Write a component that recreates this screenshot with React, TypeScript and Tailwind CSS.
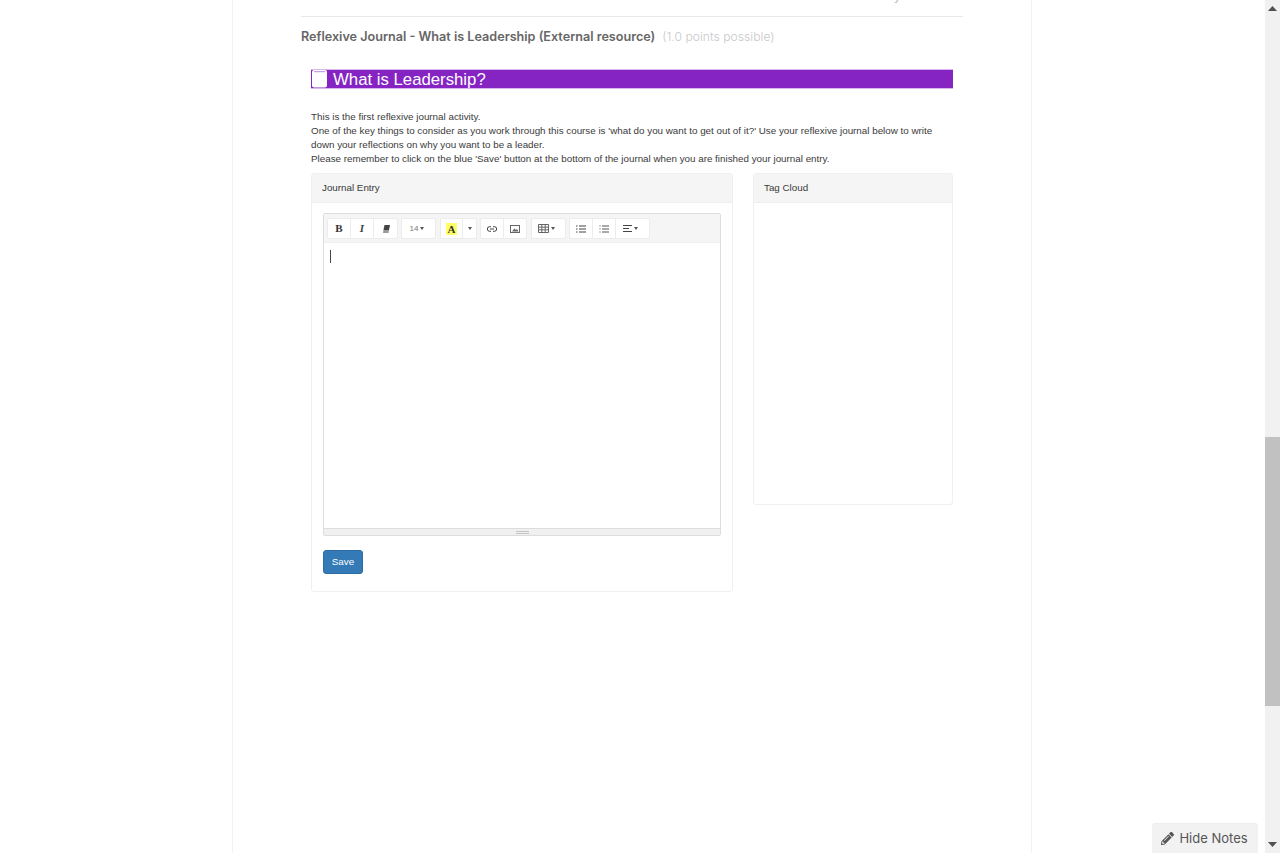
import { FaPencilAlt } from "react-icons/fa";

const sep = "border-l border-[#ececec]";
const group = "flex h-[21px] items-center rounded-[2px] border border-[#ececec] bg-white";

function Btn({ w, children, divider }: { w: string; children: React.ReactNode; divider?: boolean }) {
  return <div className={`flex h-full items-center justify-center ${w} ${divider ? sep : ""}`}>{children}</div>;
}

const Caret = () => (
  <svg width="4" height="3" viewBox="0 0 4 3" className="ml-[2px]"><path d="M0 0h4L2 3z" fill="#555" /></svg>
);

export default function App() {
  return (
    <div className="relative flex h-[853px] w-full overflow-hidden bg-white font-['Liberation_Sans',sans-serif] text-[#3a3a3a]">
      <div className="flex flex-1 justify-center">
        <div className="ml-[-1px] h-full w-[800px] border-x border-[#f2f2f2] px-[68px]">
          <div className="relative h-[17px] border-b border-[#e9e9e9]">
            <span className="absolute right-[62px] top-[-13px] font-['Inter',sans-serif] text-[13px] leading-[16px] text-[#bbbbbb]">y</span>
          </div>
          <div className="mt-[12px] flex h-[17px] items-center font-['Inter',sans-serif]">
            <span className="text-[12.62px] font-semibold text-[#666]">Reflexive Journal - What is Leadership (External resource)</span>
            <span className="ml-[7px] text-[12.2px] font-light text-[#c8c8c8]">(1.0 points possible)</span>
          </div>
          <div className="mx-[10px] mt-[23px]">
            <h2 className="flex h-[20px] items-center gap-[5px] border-y border-[#d9b5ee] bg-[#8524c3] text-[16.75px] leading-[20px] text-white">
              <svg width="17" height="18" viewBox="0 0 17 18" className="shrink-0">
                <rect x="1" y="0" width="15" height="17.5" rx="2" fill="#fff" />
                <path d="M3 1.7h11" stroke="#b58ad8" strokeWidth="1" />
              </svg>
              <span className="pt-[2px]">What is Leadership?</span>
            </h2>
            <div className="mt-[21px] text-[9.82px] leading-[14px]">
              <p>This is the first reflexive journal activity.</p>
              <p>One of the key things to consider as you work through this course is 'what do you want to get out of it?' Use your reflexive journal below to write down your reflections on why you want to be a leader.</p>
              <p>Please remember to click on the blue 'Save' button at the bottom of the journal when you are finished your journal entry.</p>
            </div>
            <div className="mt-[7px] flex items-start justify-between">
              <section className="h-[419px] w-[422px] rounded-[3px] border border-[#f0f0f0] bg-white">
                <div className="flex h-[29px] items-center border-b border-[#eeeeee] bg-[#f5f5f5] px-[10px] text-[9.8px]">Journal Entry</div>
                <div className="px-[11px] pt-[10px]">
                  <div className="rounded-[2px] border border-[#dddddd]">
                    <div className="flex h-[29px] items-center gap-[3px] border-b border-[#eeeeee] bg-[#f5f5f5] pl-[3px] pt-[1px]">
                      <div className={group}>
                        <Btn w="w-[22px]"><span className="font-['Liberation_Serif',serif] text-[11px] font-bold text-[#333]">B</span></Btn>
                        <Btn w="w-[23px]" divider><span className="font-['Liberation_Serif',serif] text-[11px] font-bold italic text-[#444]">I</span></Btn>
                        <Btn w="w-[24px]" divider>
                          <svg width="8" height="8" viewBox="0 0 8 8"><path d="M2.5 0H8L7 5H1.5z" fill="#444" /><path d="M1.5 5H7L6.5 8H1z" fill="#999" /></svg>
                        </Btn>
                      </div>
                      <div className={`${group} w-[35px] justify-center pr-[3px] text-[8px] text-[#777]`}>14<Caret /></div>
                      <div className={`${group} ml-[1px]`}>
                        <Btn w="w-[21px]"><span className="bg-[#ffff66] px-[2px] font-['Liberation_Serif',serif] text-[11px] font-bold leading-[12px] text-[#333]">A</span></Btn>
                        <Btn w="w-[14px]" divider><span className="mr-[2px] flex"><Caret /></span></Btn>
                      </div>
                      <div className={group}>
                        <Btn w="w-[22px]">
                          <svg width="10" height="6" viewBox="0 0 10 6" fill="none" stroke="#444" strokeWidth="1"><path d="M4 .7H2.6a2.3 2.3 0 0 0 0 4.6H4M6 .7h1.4a2.3 2.3 0 0 1 0 4.6H6M3 3h4" /></svg>
                        </Btn>
                        <Btn w="w-[23px]" divider>
                          <svg width="10" height="8" viewBox="0 0 10 8"><rect x=".5" y=".5" width="9" height="7" fill="none" stroke="#666" /><path d="M2 6.5 4.5 3.5 6 5l1-1 1.5 2.5z" fill="#666" /></svg>
                        </Btn>
                      </div>
                      <div className={`${group} ml-[1px] w-[35px] justify-center pr-[4px]`}>
                        <svg width="11" height="9" viewBox="0 0 11 9" fill="none" stroke="#666" strokeWidth="1"><path d="M.5.5h10v8H.5zM.5 3.2h10M.5 5.8h10M3.8.5v8M7.2.5v8" /></svg>
                        <Caret />
                      </div>
                      <div className={group}>
                        <Btn w="w-[22px]">
                          <svg width="10" height="8" viewBox="0 0 10 8" stroke="#444" strokeWidth="1"><path d="M3 1h7M3 4h7M3 7h7M0 1h1.5M0 4h1.5M0 7h1.5" /></svg>
                        </Btn>
                        <Btn w="w-[23px]" divider>
                          <svg width="10" height="8" viewBox="0 0 10 8" stroke="#555" strokeWidth="1"><path d="M3 1h7M3 4h7M3 7h7M.5 1h1M.5 4h1M.5 7h1" /></svg>
                        </Btn>
                        <Btn w="w-[34px] pr-[4px]" divider>
                          <svg width="9" height="7" viewBox="0 0 9 7" stroke="#444" strokeWidth="1"><path d="M0 .5h9M0 3.5h6M0 6.5h9" /></svg>
                          <Caret />
                        </Btn>
                      </div>
                    </div>
                    <div className="h-[285px] px-[6px] pt-[7px]">
                      <div className="h-[13px] w-px bg-[#444]" />
                    </div>
                    <div className="flex h-[7px] flex-col items-center justify-center gap-px border-t border-[#dddddd] bg-[#f0f0f0]">
                      <div className="h-px w-[13px] bg-[#c4c4c4]" />
                      <div className="h-px w-[13px] bg-[#c4c4c4]" />
                    </div>
                  </div>
                  <button className="mt-[14px] flex h-[24px] w-[40px] items-center justify-center rounded-[3px] border border-[#2e6da4] bg-[#337ab7] text-[9.8px] text-white">Save</button>
                </div>
              </section>
              <section className="h-[332px] w-[200px] rounded-[3px] border border-[#f0f0f0] bg-white">
                <div className="flex h-[29px] items-center border-b border-[#eeeeee] bg-[#f5f5f5] px-[10px] text-[9.8px]">Tag Cloud</div>
              </section>
            </div>
          </div>
        </div>
      </div>
      <div className="flex h-full w-[15px] shrink-0 flex-col items-center bg-[#f1f1f1]">
        <svg width="9" height="5" viewBox="0 0 9 5" className="mt-[6px]"><path d="M4.5 0 9 5H0z" fill="#505050" /></svg>
        <div className="mt-[426px] h-[269px] w-full bg-[#c1c1c1]" />
        <svg width="9" height="5" viewBox="0 0 9 5" className="mt-[136px]"><path d="M0 0h9L4.5 5z" fill="#505050" /></svg>
      </div>
      <div className="absolute bottom-0 right-[22px] flex h-[30px] w-[106px] items-center justify-center gap-[5px] rounded-t-[3px] border-t border-[#eeeeee] bg-[#f2f2f2] pr-[1px] font-['Inter',sans-serif] text-[13px] text-[#555]">
        <FaPencilAlt size={13} color="#555" />
        Hide Notes
      </div>
    </div>
  );
}
